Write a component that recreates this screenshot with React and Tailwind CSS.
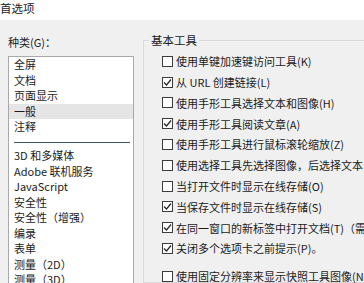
import React from 'react';

const categories = [
  '全屏',
  '文档',
  '页面显示',
  '一般',
  '注释',
  null,
  '3D 和多媒体',
  'Adobe 联机服务',
  'JavaScript',
  '安全性',
  '安全性（增强）',
  '编录',
  '表单',
  '测量（2D）',
  '测量（3D）',
];

const options = [
  { label: '使用单键加速键访问工具(K)', checked: false },
  { label: '从 URL 创建链接(L)', checked: true },
  { label: '使用手形工具选择文本和图像(H)', checked: false },
  { label: '使用手形工具阅读文章(A)', checked: true },
  { label: '使用手形工具进行鼠标滚轮缩放(Z)', checked: false },
  { label: '使用选择工具先选择图像，后选择文本', checked: false },
  { label: '当打开文件时显示在线存储(O)', checked: false },
  { label: '当保存文件时显示在线存储(S)', checked: true },
  { label: '在同一窗口的新标签中打开文档(T)（需', checked: true },
  { label: '关闭多个选项卡之前提示(P)。', checked: true },
];

const Box = ({ checked }) => (
  <span className="flex h-[11px] w-[11px] shrink-0 items-center justify-center border border-[#3c3c3c] bg-white">
    {checked && (
      <svg width="9" height="9" viewBox="0 0 9 9" fill="none">
        <path d="M1 4.5 L3.5 7 L8 1.5" stroke="#222" strokeWidth="1.2" />
      </svg>
    )}
  </span>
);

const Row = ({ label, checked, className = '' }) => (
  <div className={`flex h-[20.8px] items-center whitespace-nowrap ${className}`}>
    <Box checked={checked} />
    <span className="ml-[3px]">{label}</span>
  </div>
);

export default function App() {
  return (
    <div
      className="flex h-[283px] w-[364px] flex-col overflow-hidden bg-[#f0f0f0] text-[11px] text-[#1b1b1b]"
      style={{ fontFamily: '"Noto Sans CJK SC", "Noto Sans", sans-serif' }}
    >
      <div className="h-[20px] shrink-0 bg-white text-[11.5px] leading-[16px]">首选项</div>

      <div className="flex min-h-0 flex-1">
        <div className="w-[143px] shrink-0 pl-[8px] pt-[14px]">
          <div className="leading-[16px]">种类(G)：</div>
          <div className="mt-[6px] w-[126px] border border-[#a9a9a9] bg-white">
            {categories.map((c, i) =>
              c === null ? (
                <div key={i} className="mb-[5px] ml-[5px] mr-[3px] mt-[7.5px] h-px bg-[#3d5c5c]" />
              ) : (
                <div
                  key={i}
                  className={`whitespace-nowrap pl-[5px] leading-[15.5px] ${c === '一般' ? 'bg-[#e5e5e5]' : ''}`}
                >
                  {c}
                </div>
              )
            )}
          </div>
        </div>

        <fieldset className="mt-[12px] min-w-0 flex-1 border border-r-0 border-[#d9d9d9] pl-[18px]">
          <legend className="-ml-[13px] px-[2px] text-[11.5px] leading-[16px]">基本工具</legend>
          <div className="mt-[3px]">
            {options.map((o, i) => (
              <Row key={i} label={o.label} checked={o.checked} />
            ))}
            <Row label="使用固定分辨率来显示快照工具图像(N" checked={false} className="mt-[7px]" />
          </div>
        </fieldset>
      </div>
    </div>
  );
}
